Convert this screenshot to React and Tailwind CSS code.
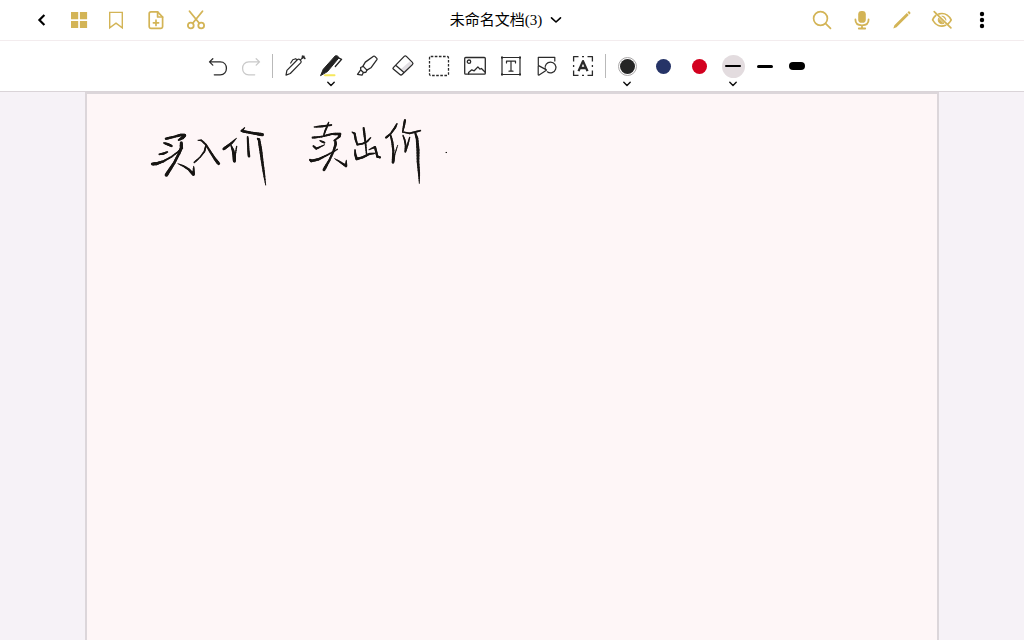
import React from "react";

const line = {
  fill: "none",
  stroke: "currentColor",
  strokeWidth: 1.4,
  strokeLinecap: "round",
  strokeLinejoin: "round",
};

function Icon({ children, className = "size-6", ...rest }) {
  return (
    <svg viewBox="0 0 24 24" aria-hidden="true" className={`${className} shrink-0`} {...line} {...rest}>
      {children}
    </svg>
  );
}

function BarButton({ label, className = "w-10 text-[#d3b456]", children }) {
  return (
    <button type="button" aria-label={label} className={`${className} flex h-10 items-center justify-center`}>
      {children}
    </button>
  );
}

function Tool({ label, className = "w-9", more = false, children }) {
  return (
    <button type="button" aria-label={label} className={`${className} relative flex h-full items-center justify-center text-[#2a2a2a]`}>
      {children}
      {more && (
        <svg viewBox="0 0 8 6" aria-hidden="true" className="absolute bottom-1 left-1/2 h-1.5 w-2 -translate-x-1/2" {...line}>
          <path d="M.8 1.2 4 4.6l3.2-3.4" stroke="#111" />
        </svg>
      )}
    </button>
  );
}

function Divider({ className }) {
  return <span className={`${className} h-6 w-px bg-[#b9b9b9]`} />;
}

// Pen strokes as [x, y, pen width] samples.
const firstWord = [
  [[78, 71, 6], [100, 66, 5], [122, 60, 6], [134, 61, 7], [128, 68, 7], [116, 75, 4]],
  [[72, 84, 4], [84, 88, 6], [95, 93, 5]],
  [[58, 118, 4], [70, 116, 5], [82, 111, 4]],
  [[37, 147, 7], [50, 146, 7], [70, 139, 5], [95, 125, 4], [115, 110, 4], [127, 99, 4]],
  [[124, 83, 7], [124, 98, 7], [117, 116, 6], [103, 143, 6], [90, 163, 7], [79, 180, 8]],
  [[114, 146, 2], [130, 153, 4], [146, 163, 5], [160, 178, 7], [161, 166, 4], [161, 154, 2]],
  [[174, 76, 2], [184, 76, 4], [198, 89, 4], [212, 112, 5], [225, 132, 6], [236, 146, 7]],
  [[198, 92, 4], [193, 110, 4], [180, 127, 3], [163, 142, 4]],
  [[251, 102, 6], [262, 94, 6], [275, 84, 5], [289, 70, 2]],
  [[273, 91, 3], [279, 106, 6], [282, 122, 7], [283, 138, 7], [286, 118, 3], [290, 94, 3]],
  [[314, 38, 2], [305, 48, 5], [320, 51, 6], [342, 55, 6], [367, 59, 8]],
  [[323, 66, 4], [324, 84, 5], [325, 105, 5], [327, 124, 6]],
  [[352, 70, 2], [357, 74, 6], [362, 104, 7], [367, 142, 6], [372, 176, 5], [377, 210, 2]],
];

const secondWord = [
  [[43, 51, 3], [66, 49, 5], [94, 45, 4]],
  [[86, 37, 3], [81, 50, 4], [75, 64, 4], [71, 77, 3]],
  [[38, 83, 5], [65, 80, 4], [95, 72, 5], [120, 72, 6], [118, 80, 5], [102, 92, 3]],
  [[60, 92, 3], [73, 98, 5]],
  [[40, 108, 4], [49, 116, 5], [62, 110, 3], [74, 104, 2]],
  [[30, 149, 4], [34, 153, 6], [55, 148, 6], [82, 135, 4], [112, 118, 3]],
  [[106, 91, 4], [107, 103, 6], [100, 125, 5], [88, 151, 5], [72, 179, 7]],
  [[104, 146, 2], [119, 155, 4], [138, 168, 6], [139, 151, 2]],
  [[156, 66, 2], [164, 71, 5], [167, 88, 5], [172, 104, 4], [188, 101, 4], [202, 94, 4], [212, 83, 3]],
  [[191, 54, 5], [194, 78, 5], [197, 105, 4], [200, 136, 3]],
  [[165, 119, 3], [166, 134, 5], [170, 147, 6], [188, 142, 5], [208, 132, 5], [224, 130, 3]],
  [[207, 119, 2], [225, 111, 5], [229, 127, 5], [232, 140, 5], [240, 142, 5]],
  [[291, 41, 3], [285, 53, 5], [272, 71, 4], [258, 83, 5]],
  [[272, 76, 4], [277, 97, 5], [280, 122, 5], [279, 157, 6], [284, 134, 3], [293, 106, 2]],
  [[315, 30, 5], [312, 46, 5], [308, 66, 3], [329, 70, 4], [345, 66, 4], [361, 62, 4]],
  [[309, 76, 3], [314, 90, 4], [317, 106, 4], [316, 125, 4], [323, 104, 4], [329, 82, 3]],
  [[345, 67, 4], [351, 85, 6], [354, 120, 7], [354, 155, 6], [357, 190, 5], [358, 220, 2]],
  [[439, 127, 2], [439, 128, 2]],
];

function Ink({ strokes, shift }) {
  return (
    <g transform={shift} stroke="#171513" fill="none" strokeLinecap="round">
      {strokes.flatMap((points, s) =>
        points.slice(1).map(([x, y, w], i) => {
          const [px, py, pw] = points[i];
          return [0, 1, 2, 3].map((k) => (
            <line
              key={`${s}-${i}-${k}`}
              x1={px + ((x - px) * k) / 4}
              y1={py + ((y - py) * k) / 4}
              x2={px + ((x - px) * (k + 1)) / 4}
              y2={py + ((y - py) * (k + 1)) / 4}
              strokeWidth={1.3 * (pw + ((w - pw) * (k + 0.5)) / 4)}
            />
          ));
        })
      )}
    </g>
  );
}

export default function App() {
  return (
    <div className="flex min-h-screen flex-col bg-[#f6f2f7] font-['Liberation_Sans','Noto_Sans_CJK_SC',sans-serif]">
      <header className="grid grid-cols-[1fr_auto_1fr] items-center border-b border-[#f3ecee] bg-white px-[22px]">
        <nav aria-label="文档" className="flex">
          <BarButton label="返回" className="w-10 text-black">
            <Icon strokeWidth="2.2"><path d="m14.4 6.9-5 5.1 5 5.1" strokeLinecap="butt" strokeLinejoin="miter" /></Icon>
          </BarButton>
          <BarButton label="缩略图" className="w-[34px] text-[#d3b456]">
            <Icon stroke="none" fill="currentColor">
              <path d="M4 4h7.2v7.2H4zM12.9 4h7.2v7.2h-7.2zM4 12.9h7.2V20H4zM12.9 12.9h7.2V20h-7.2z" />
            </Icon>
          </BarButton>
          <BarButton label="书签">
            <Icon strokeLinejoin="miter"><path d="M5.7 4.4h12.6v15.4L12 15.2l-6.3 4.6z" /></Icon>
          </BarButton>
          <BarButton label="添加页面">
            <Icon strokeWidth="1.7">
              <path d="M13.6 3.8H7A1.8 1.8 0 0 0 5.2 5.6v13A1.8 1.8 0 0 0 7 20.4h9.8a1.8 1.8 0 0 0 1.800-1.800V9z" />
              <path d="M13.6 3.8V9h5M12 12.2v5.2M9.4 14.8h5.2" />
            </Icon>
          </BarButton>
          <BarButton label="剪切">
            <Icon strokeWidth="1.8">
              <path d="M5.5 3.2 15.3 15.2M18.5 3.2 8.7 15.2" />
              <circle cx="6.8" cy="17.5" r="2.9" /><circle cx="17.2" cy="17.5" r="2.9" />
            </Icon>
          </BarButton>
        </nav>
        <button type="button" className="mr-3 flex items-center gap-2 text-[15px] leading-5 text-black">
          <span className="font-['Liberation_Serif','Noto_Sans_CJK_SC',serif]">未命名文档(3)</span>
          <svg viewBox="0 0 12 12" aria-hidden="true" className="size-3" {...line}><path d="m1.5 3.8 4.5 4.200 4.500-4.200" strokeWidth="1.6" /></svg>
        </button>
        <nav aria-label="操作" className="flex justify-end">
          <BarButton label="搜索">
            <Icon strokeWidth="1.7"><circle cx="10.5" cy="10.500" r="6.900" /><path d="m15.700 15.700 4.800 4.600" /></Icon>
          </BarButton>
          <BarButton label="录音">
            <Icon strokeWidth="1.8">
              <rect x="8.200" y="3" width="7.600" height="11.800" rx="3.400" fill="currentColor" stroke="none" />
              <path d="M5.400 11.500c0 3.800 2.600 5.800 6.600 5.800s6.600-2 6.600-5.800M12 17.500v2.800M8.800 20.500h6.400" />
            </Icon>
          </BarButton>
          <BarButton label="编辑">
            <Icon stroke="none" fill="currentColor">
              <path d="m3.300 20.500 1.100-3.300L16.800 5.100l2 2L6.500 19.300zM17.500 4.400l.8-.8c.4-.4.8-.4 1.200 0l.8.800c.4.400.4.800 0 1.200l-.8.800z" />
            </Icon>
          </BarButton>
          <BarButton label="隐藏笔记">
            <Icon strokeWidth="1.700">
              <path d="M9 5.900c5-1.300 9.600 1.200 12.200 5.900-.6 1.300-1.600 2.700-2.900 3.800M5.700 7.500C4.300 8.700 3.300 10.200 2.600 11.800c3 5.500 8 7.500 13 5.500M4.200 3.600l16.700 16.200" />
              <path d="M8.500 10.500c-1.300 3.500 1.800 6.400 5.200 4.900zM12 8.100c2.300 0 4 1.800 3.900 4" fill="currentColor" strokeWidth="1" />
            </Icon>
          </BarButton>
          <BarButton label="更多" className="w-10 text-black">
            <Icon stroke="none" fill="currentColor">
              <circle cx="12" cy="6" r="2.200" /><circle cx="12" cy="12" r="2.200" /><circle cx="12" cy="18" r="2.200" />
            </Icon>
          </BarButton>
        </nav>
      </header>

      <div role="toolbar" aria-label="绘图工具" className="flex h-[50px] items-center justify-center bg-white pr-[10px]">
        <Tool label="撤销" className="w-[34px]">
          <Icon><path d="M6.800 4.700 3.500 7.900l3.300 3.200M3.700 7.900h10.500c8.300 0 8.300 12.900 0 12.900H8.300" strokeWidth="1.300" /></Icon>
        </Tool>
        <Tool label="重做" className="w-8">
          <Icon stroke="#c9c9c9"><path d="m17.200 4.700 3.300 3.200-3.300 3.200M20.300 7.900H9.800c-8.300 0-8.300 12.900 0 12.900h5.900" strokeWidth="1.300" /></Icon>
        </Tool>
        <Divider className="ml-[5px] mr-1" />
        <Tool label="钢笔">
          <Icon strokeWidth="1.200">
            <path d="M3 21.100 3.900 16.300 14.600 5.500c1.700-1 4.400 1.400 3.300 3.200L7.300 19.500zM17.200 6.200l2.300-2.300M13.800 5.600 12.700 4.700 9.800 5.700 7.700 9" />
            <path d="m19.300 3.900 1.600-1.500M19.400 2.200l2.400 2.200" strokeWidth="1.700" />
          </Icon>
        </Tool>
        <Tool label="荧光墨水笔" more>
          <Icon>
            <path d="M6 21.200h9.500" stroke="#f6e85c" strokeWidth="2" />
            <path d="m1.700 21.300 2.600-6.100L16.200 1.900c1-.9 4.300.7 3.500 2.200L8.700 17.300z" fill="#222" stroke="#222" strokeWidth="1" />
            <path d="m19.900 4.100 2.700 1.200-6.300 7.200" stroke="#222" strokeWidth="1.300" />
            <path d="m14.800 11.800 5.400-6.300" stroke="#fff" strokeWidth=".7" />
          </Icon>
        </Tool>
        <Tool label="记号笔">
          <Icon strokeWidth="1.300">
            <path d="M18.500 2.300 10.300 8.100 8 12.100l3.900 4 4-2.300 6-8.100c.4-.6.3-.9-.1-1.300l-2-2c-.4-.4-.8-.4-1.300-.1z" />
            <path d="M8.200 12.300 5.600 13.500 5.800 16l2.600 2.500 2.500-.2 1-2.200M5.700 15.800 2.500 20.300l4.500.9 1.400-2.700" />
          </Icon>
        </Tool>
        <Tool label="橡皮擦">
          <Icon strokeWidth="1.300">
            <path d="m10 15 4.500 3 7.200-7.500-3-3z" fill="#e2dfe3" stroke="none" />
            <path d="M2.300 13.600 13.200 2.400c.8-.8 1.400-.8 2.200 0l6 6c.8.800.8 1.400 0 2.200L11.100 20.500c-.8.800-1.400.8-2.200 0l-6.600-5.400c-.5-.5-.5-1 0-1.500zM4.700 11.200l8.300 7.300" />
          </Icon>
        </Tool>
        <Tool label="选择">
          <Icon strokeWidth="1.300">
            <rect x="2.500" y="2.500" width="19" height="19" rx="1.200" strokeDasharray="2.600 1.500" strokeLinecap="butt" />
          </Icon>
        </Tool>
        <Tool label="图片">
          <Icon strokeWidth="1.300">
            <rect x="1.700" y="3.500" width="20.600" height="16.700" rx="1" />
            <circle cx="6" cy="7.700" r="1.700" />
            <path d="M5.600 20v-1.500l3.200-2.700 2.400 1 3.700-3.900 2 2.200 1.500-.6 3.600 3.500" />
          </Icon>
        </Tool>
        <Tool label="文本框">
          <Icon strokeWidth="1.200">
            <rect x="3" y="3.500" width="18" height="17" />
            <path d="M7.500 9V7.200h9V9M12 7.200v10M10 17.200h4" />
            <path d="M2 2.500h2v2H2zM20 2.500h2v2h-2zM2 19.500h2v2H2zM20 19.500h2v2h-2z" fill="currentColor" stroke="none" />
          </Icon>
        </Tool>
        <Tool label="形状">
          <Icon strokeWidth="1.200">
            <path d="M3.300 11V3.300h16.500v3.800M11 15.600 4.100 11.900c-.6-.3-.9-.1-.9.500v8c0 .7.400.9.900.6l6.900-4.500c.6-.4.6-.6 0-1zM10.300 14.900a5.400 5.400 0 1 1 2 2.900" />
          </Icon>
        </Tool>
        <Tool label="文字识别">
          <Icon strokeLinecap="butt" strokeWidth="1.300">
            <path d="M2.600 7.500V2.600h4.900M16.500 2.600h4.900v4.900M21.400 16.500v4.900h-4.900M7.500 21.400H2.600v-4.900M11 2.600h2M11 21.400h2M2.600 11v2M21.400 11v2" />
            <path d="m7.500 17.100 4.500-10 4.500 10M9 14h6" strokeWidth="2.300" />
          </Icon>
        </Tool>
        <Divider className="ml-1 mr-[3px]" />
        <Tool label="黑色" more>
          <span className="flex size-[19px] items-center justify-center rounded-full border border-[#aaa7a8]">
            <span className="size-[15px] rounded-full bg-[#252525]" />
          </span>
        </Tool>
        <Tool label="蓝色"><span className="size-[15px] rounded-full bg-[#263467]" /></Tool>
        <Tool label="红色"><span className="size-[15px] rounded-full bg-[#d3001f]" /></Tool>
        <Tool label="细线" className="w-8" more>
          <span className="flex size-[23px] shrink-0 items-center justify-center rounded-full bg-[#e3dcdf]">
            <span className="h-0.5 w-4 rounded-full bg-black" />
          </span>
        </Tool>
        <Tool label="中线" className="w-8"><span className="h-[3px] w-4 rounded-full bg-black" /></Tool>
        <Tool label="粗线" className="w-8"><span className="h-2 w-4 rounded-full bg-black" /></Tool>
      </div>

      <main className="flex flex-1 flex-col border-t border-[#dad4d8] px-[85px]">
        <section aria-label="页面" className="flex-1 border-2 border-b-0 border-[#dcd6da] bg-[#fef6f7] pl-[53px] pt-4">
          <svg viewBox="0 0 960 240" role="img" aria-label="买入价 卖出价" className="h-20 w-80">
            <Ink strokes={firstWord} shift="translate(0 15)" />
            <Ink strokes={secondWord} shift="translate(480 0)" />
          </svg>
        </section>
      </main>
    </div>
  );
}
